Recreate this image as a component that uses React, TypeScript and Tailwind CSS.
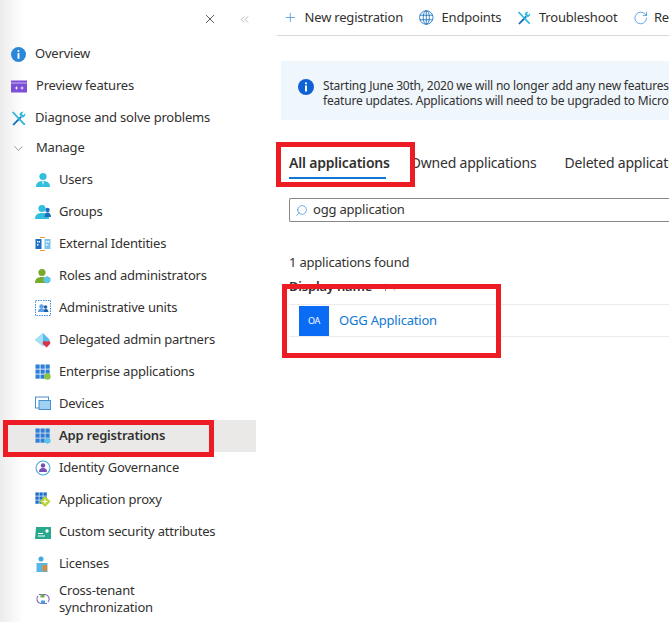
import { ChevronDown, ChevronsLeft, Plus, RotateCw, Search, ArrowUp, ArrowDown } from "lucide-react";
import type { ReactNode } from "react";

const Person = ({ x = 0, c = "#32bedd" }: { x?: number; c?: string }) => (
  <g transform={`translate(${x} 0)`}>
    <circle cx="8" cy="4.5" r="3.6" fill={c} />
    <path d="M1 15c0-4 2.5-6 7-6s7 2 7 6z" fill={c} />
  </g>
);

const Grid = ({ c = "#2f7fd8" }: { c?: string }) => (
  <g fill={c}>
    {[0, 5, 10].map((y) =>
      [0, 5, 10].map((x) => <rect key={`${x}-${y}`} x={x + 0.5} y={y + 0.5} width="4.2" height="4.2" />)
    )}
  </g>
);

const Ico = ({ children }: { children: ReactNode }) => (
  <svg viewBox="0 0 16 16" className="w-4 h-4 shrink-0">
    {children}
  </svg>
);

const icons: Record<string, ReactNode> = {
  users: (
    <Ico>
      <Person />
      <path d="M7 9.5h2L8 13z" fill="#fff" />
    </Ico>
  ),
  groups: (
    <Ico>
      <Person c="#32bedd" x={-1} />
      <circle cx="12.5" cy="6" r="2.2" fill="#1b6ec2" />
      <path d="M9.5 13c0-3 1-4.500 3-4.500s3.500 1.500 3.500 4.500z" fill="#1b6ec2" />
    </Ico>
  ),
  external: (
    <Ico>
      <rect x="0.5" y="3" width="6" height="10" fill="#1b6ec2" />
      <rect x="9.500" y="3" width="6" height="10" fill="#7cc4ec" />
      <path d="M5 1.500h5M5 14.500h5" stroke="#f29a2e" strokeWidth="1.200" fill="none" />
      <path d="M2 5h1.500v1.500H2zM4 5h1v1.500H4zM2 8h1.500v1.500H2zM11 5h1.500v1.500H11zM13 5h1v1.500h-1zM11 8h1.500v1.500H11z" fill="#fff" />
    </Ico>
  ),
  roles: (
    <Ico>
      <Person c="#76ab2c" x={-1} />
      <path d="M12 8l3.500 2v3.500L12 15.500 8.500 13.500V10z" fill="#5cc5e8" />
    </Ico>
  ),
  admin: (
    <Ico>
      <rect x="0.500" y="0.500" width="15" height="15" fill="#fff" stroke="#3f8fdb" strokeDasharray="1.500 1" />
      <circle cx="6.500" cy="6.500" r="2.200" fill="#5f9fe6" />
      <path d="M3 12c0-2.500 1.500-3.500 3.500-3.500S10 9.500 10 12z" fill="#5f9fe6" />
      <circle cx="10.500" cy="7" r="1.800" fill="#1b5fae" />
      <path d="M9 12c0-2.500.5-3 1.500-3s3 .5 3 3z" fill="#1b5fae" />
    </Ico>
  ),
  delegated: (
    <Ico>
      <path d="M8 1l7 7-7 6-8-6z" fill="#58bde8" />
      <path d="M8 1v13L0 8z" fill="#a5e0f5" />
      <path d="M11.500 15.500L8 12c-1-1.500 0-3 1.500-3 1 0 1.500.5 2 1 .5-.5 1-1 2-1 1.500 0 2.500 1.500 1.500 3z" fill="#d8344a" />
    </Ico>
  ),
  enterprise: (
    <Ico>
      <Grid />
      <circle cx="12.500" cy="12.500" r="3.200" fill="#8cc63f" />
    </Ico>
  ),
  devices: (
    <Ico>
      <rect x="0.500" y="1" width="13" height="11" fill="#fff" stroke="#4a8fd0" />
      <rect x="4" y="4.500" width="11.500" height="9" fill="#9fd1f2" stroke="#4a8fd0" />
    </Ico>
  ),
  app: (
    <Ico>
      <Grid />
      <path d="M12.500 9.500l3 1.700v3l-3 1.700-3-1.700v-3z" fill="#5cc5e8" />
    </Ico>
  ),
  identity: (
    <Ico>
      <circle cx="8" cy="8" r="7" fill="#fff" stroke="#46a8dc" strokeWidth="1.100" />
      <circle cx="8" cy="5.500" r="2.200" fill="#7a4fb5" />
      <path d="M4 12c0-3 1.500-4 4-4s4 1 4 4z" fill="#7a4fb5" />
    </Ico>
  ),
  proxy: (
    <Ico>
      <g transform="scale(0.8)">
        <Grid c="#1e6fc8" />
      </g>
      <path d="M10 4l5.500 5.500L10 15 4.500 9.500z" fill="#b5d334" />
      <path d="M10 7v5M7.500 9.500h5" stroke="#fff" />
    </Ico>
  ),
  custom: (
    <Ico>
      <path d="M1 3h15v12H0z" fill="#2aa88e" />
      <path d="M3 9.500h5M3 12h7" stroke="#fff" />
      <circle cx="12" cy="7" r="1.700" fill="#fff" />
    </Ico>
  ),
  licenses: (
    <Ico>
      <circle cx="6" cy="3" r="2.500" fill="#3fa9dd" />
      <path d="M1.500 7h11v9h-11z" fill="#5bb6e4" />
      <path d="M8 9h4v7l-2-1.500L8 16z" fill="#e0892b" />
    </Ico>
  ),
  cross: (
    <Ico>
      <path d="M4 3.500h6a4.500 4.500 0 0 1 3 7.500M12 12.500H6a4.500 4.500 0 0 1-3-7.500" fill="none" stroke="#8a5fc0" strokeWidth="1.100" />
      <rect x="5.500" y="3.500" width="4" height="3" fill="#6ab04c" />
      <rect x="6" y="9.500" width="4" height="3" fill="#3f9fe0" />
    </Ico>
  ),
};

const Wrench = ({ className }: { className: string }) => (
  <svg viewBox="0 0 16 16" className={className}>
    <path d="M1.500 14.500L10 5.500l1.500 1.500L3 15.500z" fill="#0f6cbd" />
    <path d="M9 4c0-2 2-3.800 4.500-3.200L11.500 3l1.500 1.500 2.300-2C15.800 5 14 7 12 7z" fill="#2fb8e0" />
    <path d="M1 1.500L2.500.5 14.500 13 15.500 15 13.500 14.800z" fill="#2fb8e0" />
  </svg>
);

const subItems = [
  ["users", "Users"],
  ["groups", "Groups"],
  ["external", "External Identities"],
  ["roles", "Roles and administrators"],
  ["admin", "Administrative units"],
  ["delegated", "Delegated admin partners"],
  ["enterprise", "Enterprise applications"],
  ["devices", "Devices"],
  ["app", "App registrations"],
  ["identity", "Identity Governance"],
  ["proxy", "Application proxy"],
  ["custom", "Custom security attributes"],
  ["licenses", "Licenses"],
];

export default function App() {
  return (
    <div className="relative flex w-[669px] h-[622px] overflow-hidden bg-white text-[13px] text-[#323130] font-['Noto_Sans',sans-serif] tracking-[-0.2px]">
      {/* sidebar */}
      <aside className="w-[256px] shrink-0 bg-gradient-to-r from-[#ececec] via-white via-[9%] to-white">
        <div className="flex items-center h-[38px] pl-[205px] gap-[23px] text-[#7a7a7a]">
          <span className="relative w-2.5 h-2.5 flex items-center justify-center">
            <svg viewBox="0 0 10 10" className="w-2.5 h-2.5" stroke="#605e5c" fill="none">
              <path d="M1 1l8 8M9 1L1 9" />
            </svg>
          </span>
          <ChevronsLeft size={13} strokeWidth={1} />
        </div>

        <div className="flex items-center h-8 pl-[11px] gap-[9px]">
          <svg viewBox="0 0 16 16" className="w-[15px] h-[15px]">
            <circle cx="8" cy="8" r="8" fill="#2b88d8" />
            <circle cx="8" cy="4.300" r="1.100" fill="#fff" />
            <rect x="7" y="6.500" width="2" height="6" fill="#fff" />
          </svg>
          Overview
        </div>
        <div className="flex items-center h-8 pl-[11px] gap-[9px]">
          <svg viewBox="0 0 16 12" className="w-[16px] h-[13px]">
            <rect width="16" height="12" fill="#7c4fd6" />
            <rect y="2" width="16" height="1" fill="#c9b5f2" />
            <path d="M4 7.500h3M5.500 6v3M9.500 7.500h3M11 6v3" stroke="#fff" strokeWidth="0.800" />
          </svg>
          Preview features
        </div>
        <div className="flex items-center h-8 pl-[11px] gap-[9px]">
          <Wrench className="w-[15px] h-[15px]" />
          Diagnose and solve problems
        </div>
        <div className="flex items-center h-[28px] pl-[11px] gap-[10px]">
          <ChevronDown size={15} strokeWidth={1} color="#605e5c" />
          Manage
        </div>

        <div className="pt-[2px]">
          {subItems.map(([key, label]) => (
            <div
              key={key}
              className={`flex items-center h-8 pl-[35px] gap-2 ${key === "app" ? "bg-[#ebe9e8] font-semibold" : ""}`}
            >
              {icons[key]}
              {label}
            </div>
          ))}
          <div className="flex items-center pl-[35px] gap-2 pt-[2px]">
            {icons.cross}
            <span className="leading-[17px]">
              Cross-tenant
              <br />
              synchronization
            </span>
          </div>
        </div>
      </aside>

      {/* main */}
      <main className="flex-1 min-w-0 pl-[21px]">
        <div className="flex items-center h-9 border-b border-[#d8d8d8] whitespace-nowrap">
          <Plus size={17} strokeWidth={1} color="#0f78d4" className="ml-[6px] mr-[7px]" />
          New registration
          <svg viewBox="0 0 16 16" className="w-[17px] h-[17px] ml-[16px] mr-2" fill="none" stroke="#0f6cbd" strokeWidth="0.900">
            <circle cx="8" cy="8" r="7.400" />
            <ellipse cx="8" cy="8" rx="3.400" ry="7.400" />
            <path d="M1 5.500h14M1 10.500h14M8 .6v14.800" />
          </svg>
          Endpoints
          <Wrench className="w-[16px] h-[16px] ml-[16px] mr-2" />
          Troubleshoot
          <RotateCw size={18} strokeWidth={1} color="#0f78d4" className="ml-[15px] mr-[6px]" />
          Re
        </div>

        <div className="flex ml-1 mt-[25px] h-[59px] bg-[#eff6fc] pl-[17px] pt-[17px] gap-[9px] text-[12px] leading-[15px] whitespace-nowrap overflow-hidden">
          <svg viewBox="0 0 16 16" className="w-4 h-4 mt-[1px] shrink-0">
            <circle cx="8" cy="8" r="8" fill="#0f62d6" />
            <circle cx="8" cy="4.300" r="1.100" fill="#fff" />
            <rect x="7" y="6.500" width="2" height="6" fill="#fff" />
          </svg>
          <p>
            Starting June 30th, 2020 we will no longer add any new features to Azure Active Directory Authentication
            <br />
            feature updates. Applications will need to be upgraded to Microsoft Authentication Library
          </p>
        </div>

        <div className="flex ml-3 mt-[30px] gap-[28px] text-[14px] whitespace-nowrap">
          <span className="h-[29px] leading-[26px] font-semibold border-b-2 border-[#0f78d4] w-[97px]">All applications</span>
          <span className="leading-[26px] -ml-[4px]">Owned applications</span>
          <span className="leading-[26px]">Deleted applications</span>
        </div>

        <div className="flex items-center ml-3 mt-[19px] h-[24px] border border-[#8a8886] border-r-0 rounded-l-[2px] pl-[5px] gap-[5px]">
          <Search size={13} strokeWidth={1.100} color="#0f78d4" className="-scale-x-100" />
          ogg application
        </div>

        <p className="ml-3 mt-[31px] leading-[18px]">1 applications found</p>
        <div className="flex items-center ml-3 mt-[7px] h-[18px] font-semibold">
          Display name
          <ArrowUp size={11} strokeWidth={1.200} className="ml-[8px]" />
          <ArrowDown size={11} strokeWidth={1.200} color="#c8c6c4" className="-ml-[2px]" />
        </div>

        <div className="ml-3 mt-[8px] flex items-center h-[33px] border-y border-[#edebe9] pl-[10px] gap-[10px]">
          <div className="w-[30px] h-[30px] bg-[#0a6cf5] text-white text-[9px] flex items-center justify-center">OA</div>
          <span className="text-[#0f78d4]">OGG Application</span>
        </div>
      </main>

      {/* annotation boxes */}
      <div className="absolute left-[276px] top-[142px] w-[139px] h-[45px] border-[5px] border-[#ed1c24]" />
      <div className="absolute left-[282px] top-[284px] w-[219px] h-[74px] border-[5px] border-[#ed1c24]" />
      <div className="absolute left-[3px] top-[420px] w-[211px] h-[37px] border-[5px] border-[#ed1c24]" />
    </div>
  );
}
